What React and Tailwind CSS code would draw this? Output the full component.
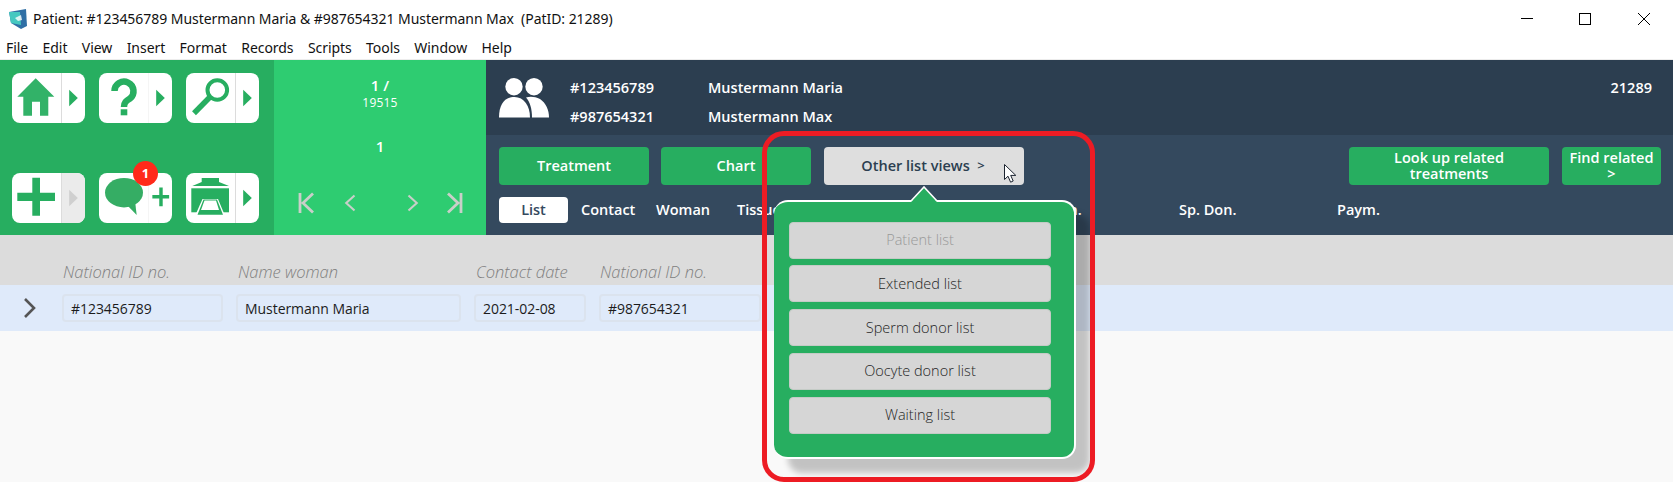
const Arrow = ({ color = "#27ae60" }) => (
  <svg viewBox="0 0 24 50" className="w-full h-full">
    <polygon points="7.5,16.5 16.5,25 7.5,33.5" fill={color} />
  </svg>
);

const IconButton = ({ children, right, split = true, muted = false }) => (
  <div className="w-[73px] h-[50px] flex bg-white rounded-[8px] overflow-hidden">
    <div className="w-[49px] h-[50px] shrink-0">
      <svg viewBox="0 0 49 50" className="w-[49px] h-[50px]">{children}</svg>
    </div>
    <div className={`flex-1 border-l ${split ? "border-[#dcdcdc]" : "border-[#f5f5f5]"} ${muted ? "bg-[#ebebeb]" : ""}`}>
      {right}
    </div>
  </div>
);

const NavIcon = ({ d, className }) => (
  <svg viewBox="0 0 16 22" className={`h-[22px] shrink-0 ${className}`} fill="none" stroke="#c9cfc9" strokeWidth="2.8">
    <path d={d} />
  </svg>
);

const Green = "#27ae60";

const fieldCls = "h-[28px] flex items-center px-[7px] border-2 border-[#dbe3ee] rounded-[4px] text-[14px] text-[#1c1c1c] font-normal tracking-[-0.05px]";
const labelCls = "italic font-light text-[16.5px] leading-[24px] text-[#808080]";

const popItems = ["Patient list", "Extended list", "Sperm donor list", "Oocyte donor list", "Waiting list"];

export default function App() {
  return (
    <div className="relative w-[1673px] h-[482px] overflow-hidden bg-[#f9f9f9] flex flex-col font-['Open_Sans',sans-serif]">
      {/* Title bar */}
      <div className="h-[37px] bg-white flex items-center pl-[8px] shrink-0">
        <svg viewBox="0 0 20 20" className="w-[20px] h-[20px] shrink-0">
          <polygon points="1,3 18,0 19,17 13,20 3,14" fill="#2f6fa5" />
          <polygon points="1,3 12,3 13,16 3,14" fill="#45c8c0" />
          <path d="M7 9 L13 6 L14 11 L10 12 Z" fill="#ffffff" opacity="0.8" />
        </svg>
        <span className="ml-[5px] text-[14px] text-[#111] tracking-[-0.05px] font-['Noto_Sans',sans-serif]">
          Patient: #123456789 Mustermann Maria &amp; #987654321 Mustermann Max&nbsp; (PatID: 21289)
        </span>
        <div className="ml-auto flex items-center h-full">
          <div className="w-[12px] h-px bg-black mr-[46px]" />
          <div className="w-[12px] h-[12px] border border-black mr-[47px]" />
          <svg viewBox="0 0 12 12" className="w-[12px] h-[12px] mr-[23px]" stroke="#000" strokeWidth="1">
            <path d="M0 0 L12 12 M12 0 L0 12" />
          </svg>
        </div>
      </div>

      {/* Menu bar */}
      <div className="h-[22px] bg-white flex items-start pl-[6px] gap-[14.4px] text-[14px] tracking-[-0.05px] text-[#111] leading-[22px] shrink-0 font-['Noto_Sans',sans-serif]">
        {["File", "Edit", "View", "Insert", "Format", "Records", "Scripts", "Tools", "Window", "Help"].map((m) => (
          <span key={m}>{m}</span>
        ))}
      </div>
      <div className="h-px bg-[#ececec] shrink-0" />

      {/* Toolbar */}
      <div className="h-[175px] flex shrink-0">
        <div className="w-[274px] bg-[#27ae60] pl-[12px] pr-[13px] pt-[13px] pb-[12px] flex flex-col justify-between">
          <div className="flex gap-[14px]">
            <IconButton right={<Arrow />}>
              <path d="M23.7 5.3 L42.3 23.7 H36.3 V42.7 H28 V28.7 H20 V42.7 H11.3 V23.7 H5.3 Z" fill={Green} fillOpacity="0.95" />
            </IconButton>
            <IconButton right={<Arrow />} split={false}>
              <path d="M15.5 18 A9.5 9.5 0 1 1 31 25.5 C27 28 25 29.5 25 34" fill="none" stroke={Green} strokeWidth="6.5" />
              <rect x="21.7" y="36.3" width="6.6" height="6" fill={Green} />
            </IconButton>
            <IconButton right={<Arrow />}>
              <circle cx="31.3" cy="17" r="9.8" fill="none" stroke={Green} strokeWidth="4" />
              <path d="M8 40.3 L24 24" stroke={Green} strokeWidth="5.5" />
            </IconButton>
          </div>
          <div className="flex gap-[14px]">
            <IconButton right={<Arrow color="#cfcfcf" />} muted>
              <path d="M20.3 4.7 H28 V19.7 H43 V28 H28 V42.7 H20.3 V28 H5.3 V19.7 H20.3 Z" fill={Green} />
            </IconButton>
            <div className="relative">
              <IconButton
                split={false}
                right={
                  <svg viewBox="0 0 24 50" className="w-full h-full">
                    <path d="M12.5 14 V33.5 M3.5 23.7 H21" stroke={Green} strokeWidth="3.6" fill="none" />
                  </svg>
                }
              >
                <ellipse cx="25" cy="19.7" rx="19" ry="14.7" fill="#35ad64" />
                <path d="M26 30 L37.7 42 L36 28 Z" fill="#35ad64" />
              </IconButton>
              <div className="absolute left-[34px] top-[-12px] w-[25px] h-[25px] rounded-full bg-[#ff2a1a] text-white text-[13px] font-bold flex items-center justify-center">
                1
              </div>
            </div>
            <IconButton right={<Arrow />}>
              <rect x="15.7" y="5" width="17.3" height="4" fill={Green} />
              <polygon points="15.7,9 33,9 43,13 6.3,13" fill={Green} />
              <rect x="5.3" y="15.3" width="37.7" height="24" fill={Green} />
              <polygon points="16.5,26 32,26 39.5,44 8.5,44" fill="#fff" />
              <polygon points="17.5,26.5 31,26.5 37,41.8 11.5,41.8" fill={Green} />
              <polygon points="18.5,27.5 30,27.5 33,37 15,37" fill="#fff" />
            </IconButton>
          </div>
        </div>

        <div className="w-[212px] bg-[#2ecc71] flex flex-col items-center text-white font-semibold">
          <div className="mt-[16px] text-[15px] leading-[19px]">1 /</div>
          <div className="text-[12px] leading-[15px] font-normal tracking-[0.2px]">19515</div>
          <div className="mt-[26px] text-[15px] leading-[20px]">1</div>
          <div className="mt-[36px] w-full flex items-center pl-[24px]">
            <NavIcon className="w-[16px]" d="M2 1 V21 M15 1.5 L5 11 L15 20.5" />
            <NavIcon className="w-[12px] ml-[30px]" d="M14 1 L3 11 L14 21" />
            <NavIcon className="w-[12px] ml-[51px]" d="M2 1 L13 11 L2 21" />
            <NavIcon className="w-[16px] ml-[28px]" d="M14 1 V21 M1 1.5 L11 11 L1 20.5" />
          </div>
        </div>

        <div className="flex-1 flex flex-col text-white font-semibold">
          <div className="h-[75px] bg-[#2c3e50] flex pl-[13px] pr-[21px] pt-[18px] text-[14.5px]">
            <svg viewBox="0 0 50 40" className="w-[50px] h-[40px] shrink-0">
              <circle cx="15" cy="8.7" r="8.7" fill="#fff" />
              <circle cx="35" cy="8.7" r="8.7" fill="#fff" />
              <path d="M27 19.5 C31 18 36 18.5 41 21 C47 25 50 32 50 39.5 H33 C33 31 31 24 27 19.5 Z" fill="#fff" />
              <path d="M0 39.5 C0 26 6 19 15.5 19 C25 19 31 28 31 39.5 Z" fill="#fff" />
            </svg>
            <div className="ml-[21px] mt-[-5px] grid grid-cols-[138px_auto] auto-rows-[29px] items-center">
              <span>#123456789</span>
              <span>Mustermann Maria</span>
              <span>#987654321</span>
              <span>Mustermann Max</span>
            </div>
            <div className="ml-auto mt-[-5px] h-[29px] flex items-center">21289</div>
          </div>
          <div className="h-[100px] bg-[#34495e] pl-[13px] pr-[12px] pt-[12px] text-[14.5px]">
            <div className="flex h-[38px]">
              <div className="w-[150px] bg-[#27ae60] rounded-[4px] flex items-center justify-center">Treatment</div>
              <div className="w-[150px] ml-[12px] bg-[#27ae60] rounded-[4px] flex items-center justify-center">Chart</div>
              <div className="w-[200px] ml-[13px] bg-[#dedede] rounded-[4px] flex items-center justify-center text-[#2c3e50] pr-[2px]">
                Other list views&nbsp;&nbsp;<span className="font-semibold text-[13px]">&gt;</span>
              </div>
              <div className="w-[200px] ml-auto bg-[#27ae60] rounded-[4px] flex items-center justify-center text-center leading-[16px] px-[20px]">
                Look up related treatments
              </div>
              <div className="w-[99px] ml-[13px] bg-[#27ae60] rounded-[4px] flex flex-col items-center justify-center text-center leading-[16px]">
                <span>Find related</span>
                <span>&gt;</span>
              </div>
            </div>
            <div className="flex mt-[12px] h-[26px] items-center">
              <div className="w-[69px] h-[26px] bg-white rounded-[4px] text-[#34495e] flex items-center justify-center mr-[13px]">List</div>
              <span className="w-[75px]">Contact</span>
              <span className="w-[81px]">Woman</span>
              <span className="w-[284px]">Tissue</span>
              <span className="w-[158px]">Oo. Don.</span>
              <span className="w-[158px]">Sp. Don.</span>
              <span>Paym.</span>
            </div>
          </div>
        </div>
      </div>

      {/* Table header */}
      <div className="h-[50px] bg-[#dcdcdc] flex items-end pb-[1px] pl-[63px] shrink-0">
        <span className={`w-[175px] ${labelCls}`}>National ID no.</span>
        <span className={`w-[238px] ${labelCls}`}>Name woman</span>
        <span className={`w-[124px] ${labelCls}`}>Contact date</span>
        <span className={labelCls}>National ID no.</span>
      </div>

      {/* Row */}
      <div className="h-[46px] bg-[#dfeafa] flex items-center shrink-0">
        <div className="w-[62px] flex justify-center pr-[2px]">
          <svg viewBox="0 0 14 20" className="w-[14px] h-[20px]" fill="none" stroke="#555" strokeWidth="2.6">
            <path d="M2 1 L11 10 L2 19" />
          </svg>
        </div>
        <div className="flex gap-[13px]">
          <div className={`w-[161px] ${fieldCls}`}>#123456789</div>
          <div className={`w-[225px] ${fieldCls}`}>Mustermann Maria</div>
          <div className={`w-[112px] ${fieldCls}`}>2021-02-08</div>
          <div className={`w-[162px] ${fieldCls}`}>#987654321</div>
        </div>
      </div>

      {/* Popover */}
      <div className="absolute left-[774px] top-[200px] w-[302px] h-[259px] bg-[#27ae60] border-2 border-l-0 border-white rounded-[14px] shadow-[14px_14px_6px_rgba(0,0,0,0.22)] pl-[15px] pr-[23px] pt-[19.5px] flex flex-col gap-[6.75px]">
        {popItems.map((t, i) => (
          <div
            key={t}
            className={`h-[37px] shrink-0 bg-[#d6d6d6] border border-[#c4cbc6] rounded-[4px] flex items-center justify-center text-[14.5px] font-light ${i === 0 ? "text-[#999999]" : "text-[#1f1f1f]"}`}
          >
            {t}
          </div>
        ))}
      </div>
      <svg viewBox="0 0 30 16" className="absolute left-[909px] top-[186px] w-[30px] h-[16px]">
        <polygon points="2,16 15,1 28,16" fill="#27ae60" />
        <path d="M2 15 L15 1 L28 15" fill="none" stroke="#fff" strokeWidth="1.6" />
      </svg>

      {/* Annotation */}
      <div className="absolute left-[762px] top-[131px] w-[333px] h-[351px] border-[5px] border-[#ed1c24] rounded-[22px] pointer-events-none" />

      {/* Cursor */}
      <svg viewBox="0 0 13 19" className="absolute left-[1004px] top-[164px] w-[13px] h-[19px]">
        <path d="M0.5 0.5 V15.5 L4 12.2 L6.6 18.2 L9.2 17 L6.7 11.4 L11.8 11.4 Z" fill="#fff" stroke="#1c2430" strokeWidth="1" />
      </svg>
    </div>
  );
}
